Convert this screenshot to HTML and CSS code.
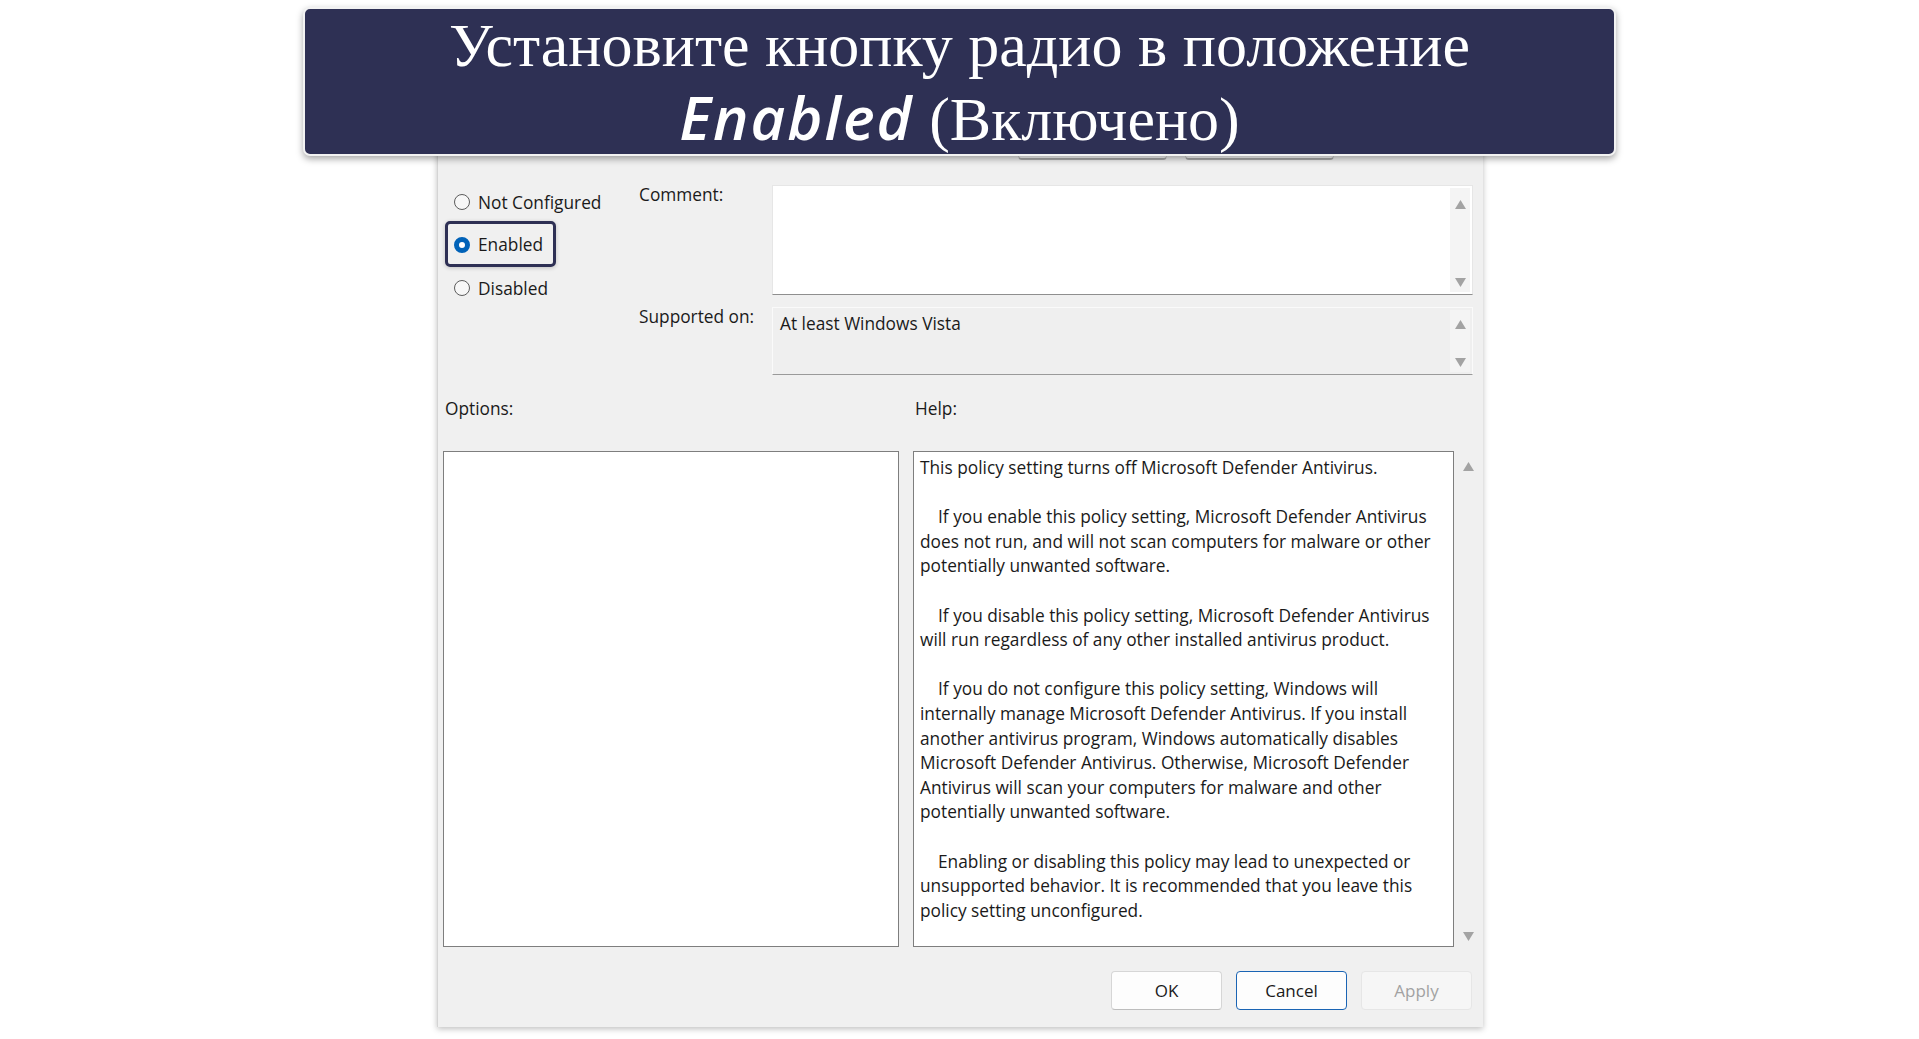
FILE: index.html
```html
<!DOCTYPE html>
<html lang="ru">
<head>
  <meta charset="UTF-8">
  <meta name="viewport" content="width=device-width, initial-scale=1.0">
  <title>Turn off Microsoft Defender Antivirus</title>
  <link rel="stylesheet" href="styles.css">
</head>
<body>

  <div class="stage">

    <!-- Подпись поверх скриншота -->
    <div class="banner">
      <div class="banner-line">Установите кнопку радио в положение</div>
      <div class="banner-line"><em>Enabled</em> (Включено)</div>
    </div>

    <div class="dialog">
      <!-- верхние кнопки закрыты баннером -->
      <div class="topbar">
        <span class="btn top"></span>
        <span class="btn top"></span>
      </div>

      <div class="upper">
        <div class="radios">
          <label class="radio first"><span class="dot"></span>Not Configured</label>
          <label class="radio on"><span class="dot"></span>Enabled</label>
          <label class="radio"><span class="dot"></span>Disabled</label>
        </div>

        <div class="fields">
          <div class="field-label">Comment:</div>
          <div class="field comment">
            <div class="field-body"></div>
            <div class="scroll">
              <svg class="arrow" viewBox="0 0 10 8"><path d="M5 0 L10 8 L0 8 Z"/></svg>
              <svg class="arrow" viewBox="0 0 10 8"><path d="M0 0 L10 0 L5 8 Z"/></svg>
            </div>
          </div>

          <div class="field-label">Supported on:</div>
          <div class="field supported">
            <div class="field-body">At least Windows Vista</div>
            <div class="scroll">
              <svg class="arrow" viewBox="0 0 10 8"><path d="M5 0 L10 8 L0 8 Z"/></svg>
              <svg class="arrow" viewBox="0 0 10 8"><path d="M0 0 L10 0 L5 8 Z"/></svg>
            </div>
          </div>
        </div>
      </div>

      <div class="captions">
        <div class="caption-options">Options:</div>
        <div class="caption-help">Help:</div>
      </div>

      <div class="panes">
        <div class="options-box"></div>
        <div class="help-box">
          <p>This policy setting turns off Microsoft Defender Antivirus.</p>
          <p class="indent">If you enable this policy setting, Microsoft Defender Antivirus<br>does not run, and will not scan computers for malware or other<br>potentially unwanted software.</p>
          <p class="indent">If you disable this policy setting, Microsoft Defender Antivirus<br>will run regardless of any other installed antivirus product.</p>
          <p class="indent">If you do not configure this policy setting, Windows will<br>internally manage Microsoft Defender Antivirus. If you install<br>another antivirus program, Windows automatically disables<br>Microsoft Defender Antivirus. Otherwise, Microsoft Defender<br>Antivirus will scan your computers for malware and other<br>potentially unwanted software.</p>
          <p class="indent">Enabling or disabling this policy may lead to unexpected or<br>unsupported behavior. It is recommended that you leave this<br>policy setting unconfigured.</p>
        </div>
        <div class="help-scroll">
          <svg class="arrow" viewBox="0 0 10 8"><path d="M5 0 L10 8 L0 8 Z"/></svg>
          <svg class="arrow" viewBox="0 0 10 8"><path d="M0 0 L10 0 L5 8 Z"/></svg>
        </div>
      </div>

      <div class="actions">
        <button class="btn">OK</button>
        <button class="btn default">Cancel</button>
        <button class="btn disabled">Apply</button>
      </div>
    </div>

  </div>

</body>
</html>
```

FILE: styles.css
```css
/* Страница */
body {
  margin: 0;
  padding: 0;
  background-color: #ffffff;
  font-family: "Open Sans", "Noto Sans", sans-serif;
  color: #1a1a1a;
}

.stage {
  position: relative;
  width: 1919px;
  height: 1039px;
  overflow: hidden;
}

/* Баннер */
.banner {
  position: absolute;
  left: 303px;
  top: 7px;
  width: 1309px;
  height: 145px;
  background-color: #2e3054;
  border: 2px solid #f2f2f2;
  border-radius: 7px;
  box-shadow: 0 3px 7px rgba(0, 0, 0, 0.35);
  color: #ffffff;
  text-align: center;
  z-index: 2;
}

.banner-line {
  font-family: "Liberation Serif", "Times New Roman", serif;
  font-size: 62px;
  line-height: 72px;
}

.banner-line em {
  font-family: "Open Sans", "Noto Sans", sans-serif;
  font-weight: 600;
  font-size: 60px;
  letter-spacing: 2px;
}

/* Окно */
.dialog {
  margin-left: 437px;
  margin-top: 100px;
  width: 1045px;
  height: 927px;
  background-color: #f0f0f0;
  border-left: 1px solid #d4d4d4;
  box-shadow: 0 2px 6px rgba(0, 0, 0, 0.25);
  font-size: 17.3px;
}

.btn {
  width: 111px;
  height: 39px;
  font-family: "Open Sans", "Noto Sans", sans-serif;
  font-size: 17px;
  color: #1a1a1a;
  background-color: #fdfdfd;
  border: 1px solid #d6d6d6;
  border-bottom-color: #bdbdbd;
  border-radius: 4px;
  padding: 0;
  box-sizing: border-box;
}

.btn.default {
  border: 1px solid #1a64b4;
}

.btn.disabled {
  color: #a2a2a2;
  background-color: #f6f6f6;
  border-color: #e6e6e6;
}

.topbar {
  display: flex;
  gap: 18px;
  padding-top: 21px;
  padding-left: 580px;
}

.btn.top {
  display: block;
  width: 149px;
  border-bottom: 2px solid #a9a9a9;
}

.upper {
  display: flex;
  margin-top: 25px;
}

/* Радиокнопки */
.radios {
  width: 194px;
  padding-left: 7px;
  display: flex;
  flex-direction: column;
  align-items: flex-start;
  margin-top: -2px;
}

.radio {
  display: flex;
  align-items: center;
  gap: 8px;
  height: 42px;
  padding: 0 10px 0 6px;
  border: 3px solid transparent;
  box-sizing: border-box;
}

.radio.first {
  height: 38px;
}

.radio.on {
  height: 46px;
  padding-top: 1px;
  border-color: #2e3054;
  border-radius: 5px;
  box-shadow: 0 1px 4px rgba(0, 0, 0, 0.2);
}

.dot {
  width: 14px;
  height: 14px;
  border: 1px solid #5c5c5c;
  border-radius: 50%;
  background-color: #f7f7f7;
}

.radio.on .dot {
  width: 6px;
  height: 6px;
  border: 5px solid #0062b8;
  background-color: #ffffff;
}

/* Поля */
.fields {
  display: grid;
  grid-template-columns: 133px 701px;
  row-gap: 12px;
}

.field-label {
  margin-top: -2px;
}

.field {
  display: flex;
  box-sizing: border-box;
  border: 1px solid #e6e6e6;
  border-bottom: 1px solid #8f8f8f;
}

.field.comment {
  height: 110px;
  background-color: #ffffff;
}

.field.supported {
  height: 68px;
  background-color: #efefef;
  border-color: #fafafa;
  border-bottom-color: #9a9a9a;
}

.field-body {
  flex: 1;
  padding: 4px 7px;
}

.scroll {
  width: 20px;
  margin: 2px 2px 2px 0;
  background-color: #f4f4f4;
  display: flex;
  flex-direction: column;
  justify-content: space-between;
  align-items: center;
  padding: 12px 0 5px;
}

.supported .scroll {
  padding: 10px 0 5px;
}

.arrow {
  width: 11px;
  height: 9px;
  fill: #a3a3a3;
}

/* Подписи */
.captions {
  display: flex;
  margin-top: 22px;
  height: 24px;
}

.caption-options {
  width: 470px;
  padding-left: 7px;
}

/* Панели */
.panes {
  display: flex;
  margin-top: 30px;
  padding-left: 5px;
}

.options-box {
  width: 456px;
  height: 496px;
  box-sizing: border-box;
  background-color: #ffffff;
  border: 1px solid #7e7e7e;
}

.help-box {
  margin-left: 14px;
  width: 541px;
  height: 496px;
  box-sizing: border-box;
  background-color: #ffffff;
  border: 1px solid #7e7e7e;
  padding: 4px 6px;
  line-height: 24.6px;
  white-space: nowrap;
}

.help-box p {
  margin: 0 0 24.6px;
}

.help-box .indent {
  text-indent: 18px;
}

.help-scroll {
  width: 29px;
  height: 496px;
  display: flex;
  flex-direction: column;
  justify-content: space-between;
  align-items: center;
  padding: 11px 0 6px;
  box-sizing: border-box;
}

/* Кнопки */
.actions {
  display: flex;
  justify-content: flex-end;
  gap: 14px;
  margin-top: 24px;
  padding-right: 11px;
}
```
